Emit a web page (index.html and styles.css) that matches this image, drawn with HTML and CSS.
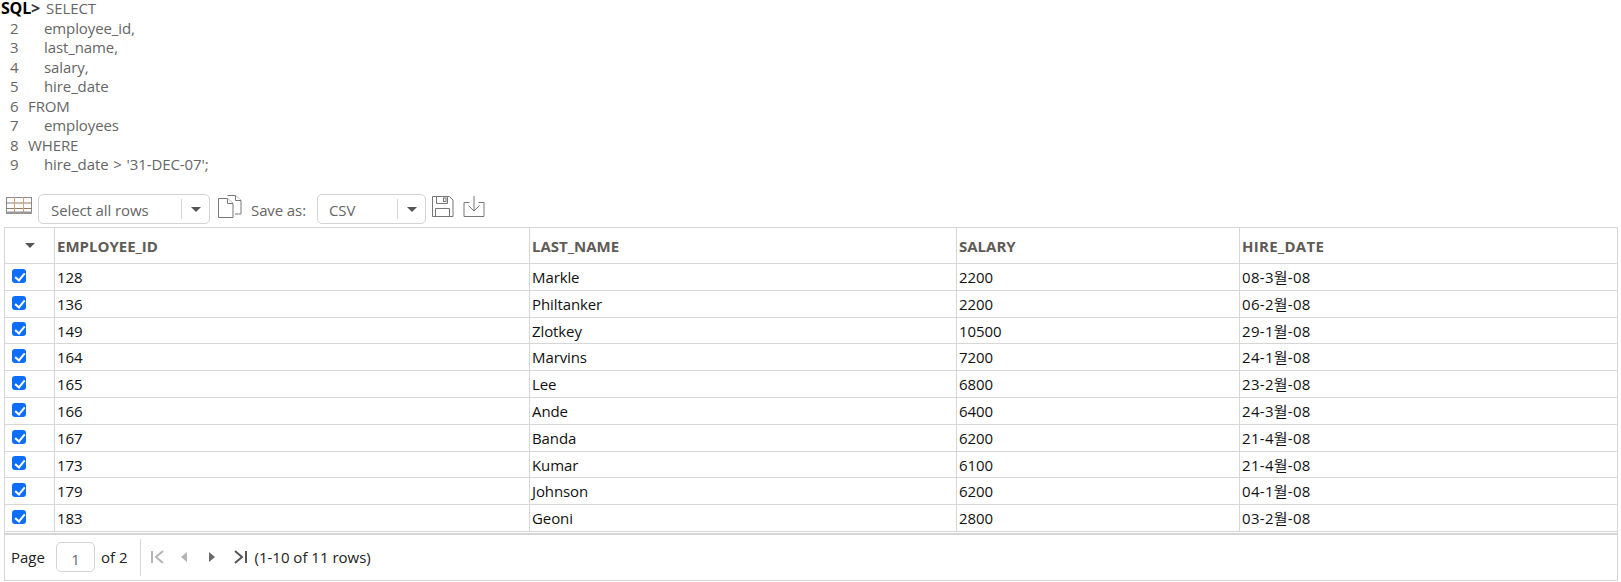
FILE: index.html
```html
<!DOCTYPE html>
<html lang="en">
<head>
<meta charset="utf-8">
<title>SQL result</title>
<link rel="stylesheet" href="styles.css">
</head>
<body>
<div class="sql">
<div class="line"><b class="prompt">SQL</b><b class="gt">&gt;</b><span class="first">SELECT</span></div>
<div class="line"><i class="n">2</i><span class="ind">employee_id,</span></div>
<div class="line"><i class="n">3</i><span class="ind">last_name,</span></div>
<div class="line"><i class="n">4</i><span class="ind">salary,</span></div>
<div class="line"><i class="n">5</i><span class="ind">hire_date</span></div>
<div class="line"><i class="n">6</i><span class="kw">FROM</span></div>
<div class="line"><i class="n">7</i><span class="ind">employees</span></div>
<div class="line"><i class="n">8</i><span class="kw">WHERE</span></div>
<div class="line"><i class="n">9</i><span class="ind">hire_date &gt; '31-DEC-07';</span></div>
</div>

<div class="toolbar">
  <svg class="ic grid-ic" width="26" height="20" viewBox="0 0 26 20"><rect x="0.5" y="0.5" width="25" height="16" fill="#fff" stroke="#8a8a8a"/><path d="M0 6h26M0 11.500h26" stroke="#8a7a6a"/><path d="M8.500 0v17M17.500 0v17" stroke="#d9a070"/><path d="M0 15.500h26" stroke="#999" stroke-width="2"/></svg>
  <div class="select sel-rows"><span class="sel-text">Select all rows</span><span class="sel-arrow"><i class="caret"></i></span></div>
  <svg class="ic copy-ic" width="24" height="23" viewBox="0 0 24 23" fill="#fff" stroke="#777"><path d="M9.500 0.500h8l5.500 5v13.500h-6"/><path d="M17.500 0.500v5h5.500"/><path d="M0.500 3.500h9l5.500 5v14h-14.500z"/><path d="M9.500 3.500v5h5.500"/></svg>
  <span class="save-label">Save as:</span>
  <div class="select sel-csv"><span class="sel-text">CSV</span><span class="sel-arrow"><i class="caret"></i></span></div>
  <svg class="ic save-ic" width="23" height="23" viewBox="0 0 23 23" fill="none" stroke="#777"><path d="M1.500 1.500h17l3.500 3.500v16.500h-20.500z"/><path d="M5.500 1.500v7h11v-7"/><rect x="12.500" y="3" width="2.500" height="3.500"/><path d="M4.500 21.500v-8h14v8"/></svg>
  <svg class="ic dl-ic" width="22" height="23" viewBox="0 0 22 23" fill="none" stroke="#777"><path d="M6.500 7.500h-5.500v14h20v-14h-5.500"/><path d="M11 1v15M5.500 10.500l5.500 5.500 5.500-5.500"/></svg>
</div>

<div class="report">
  <div class="row head">
    <div class="cell c0"><i class="caret"></i></div>
    <div class="cell c1">EMPLOYEE_ID</div>
    <div class="cell c2">LAST_NAME</div>
    <div class="cell c3">SALARY</div>
    <div class="cell c4">HIRE_DATE</div>
  </div>
  <div class="row"><div class="cell c0"><span class="check"></span></div><div class="cell c1">128</div><div class="cell c2">Markle</div><div class="cell c3">2200</div><div class="cell c4">08-3월-08</div></div>
  <div class="row"><div class="cell c0"><span class="check"></span></div><div class="cell c1">136</div><div class="cell c2">Philtanker</div><div class="cell c3">2200</div><div class="cell c4">06-2월-08</div></div>
  <div class="row"><div class="cell c0"><span class="check"></span></div><div class="cell c1">149</div><div class="cell c2">Zlotkey</div><div class="cell c3">10500</div><div class="cell c4">29-1월-08</div></div>
  <div class="row"><div class="cell c0"><span class="check"></span></div><div class="cell c1">164</div><div class="cell c2">Marvins</div><div class="cell c3">7200</div><div class="cell c4">24-1월-08</div></div>
  <div class="row"><div class="cell c0"><span class="check"></span></div><div class="cell c1">165</div><div class="cell c2">Lee</div><div class="cell c3">6800</div><div class="cell c4">23-2월-08</div></div>
  <div class="row"><div class="cell c0"><span class="check"></span></div><div class="cell c1">166</div><div class="cell c2">Ande</div><div class="cell c3">6400</div><div class="cell c4">24-3월-08</div></div>
  <div class="row"><div class="cell c0"><span class="check"></span></div><div class="cell c1">167</div><div class="cell c2">Banda</div><div class="cell c3">6200</div><div class="cell c4">21-4월-08</div></div>
  <div class="row"><div class="cell c0"><span class="check"></span></div><div class="cell c1">173</div><div class="cell c2">Kumar</div><div class="cell c3">6100</div><div class="cell c4">21-4월-08</div></div>
  <div class="row"><div class="cell c0"><span class="check"></span></div><div class="cell c1">179</div><div class="cell c2">Johnson</div><div class="cell c3">6200</div><div class="cell c4">04-1월-08</div></div>
  <div class="row"><div class="cell c0"><span class="check"></span></div><div class="cell c1">183</div><div class="cell c2">Geoni</div><div class="cell c3">2800</div><div class="cell c4">03-2월-08</div></div>
  <div class="pager">
    <span class="pg-label">Page</span>
    <span class="pg-input">1</span>
    <span class="pg-of">of 2</span>
    <span class="pg-sep"></span>
    <svg class="pg-ic first-ic" width="14" height="14" viewBox="0 0 14 14" fill="none" stroke="#b4b4b4" stroke-width="2"><path d="M1 1v12M12 1l-7 6 7 6"/></svg>
    <svg class="pg-ic prev-ic" width="8" height="12" viewBox="0 0 8 12"><path d="M7 1v10L1 6z" fill="#b4b4b4"/></svg>
    <svg class="pg-ic next-ic" width="8" height="12" viewBox="0 0 8 12"><path d="M1 1v10l6-5z" fill="#6a6a6a"/></svg>
    <svg class="pg-ic last-ic" width="14" height="14" viewBox="0 0 14 14" fill="none" stroke="#555" stroke-width="2"><path d="M1 1l7 6-7 6M12 1v12"/></svg>
    <span class="pg-range">(1-10 of 11 rows)</span>
  </div>
</div>
</body>
</html>
```
FILE: styles.css
```css
* { box-sizing: border-box; }
html, body { margin: 0; padding: 0; background: #fff; }
body {
  width: 1621px;
  height: 582px;
  overflow: hidden;
  font-family: "Open Sans", "Noto Sans", "Noto Sans CJK KR", sans-serif;
  font-size: 15px;
  color: #111;
}
i { font-style: normal; }

.sql {
  height: 190px;
  color: #666;
  letter-spacing: -0.1px;
  word-spacing: 1px;
}
.line { height: 19.500px; line-height: 16px; white-space: pre; }
.prompt { color: #000; font-size: 16px; font-weight: 700; margin-left: 1px; letter-spacing: -0.2px; }
.gt { color: #333; font-size: 16px; font-weight: 700; }
.first { margin-left: 6px; }
.n { display: inline-block; width: 28px; padding-left: 10px; }
.ind { margin-left: 16px; }

.toolbar {
  display: flex;
  align-items: center;
  height: 37px;
  padding-left: 6px;
  color: #666;
}
.ic { flex: none; display: block; }
.grid-ic { margin-top: -3px; }
.select {
  display: flex;
  align-items: center;
  height: 30px;
  margin-top: 1px;
  border: 1px solid #d4d4d4;
  border-radius: 5px;
  background: #fff;
}
.sel-rows { width: 172px; margin-left: 6px; }
.sel-csv { width: 109px; margin-left: 11px; }
.sel-text { flex: 1; padding: 2px 0 0 12px; letter-spacing: -0.1px; }
.sel-csv .sel-text { padding-left: 11px; }
.sel-arrow {
  flex: none;
  width: 28px;
  height: 20px;
  border-left: 1px solid #d4d4d4;
  display: flex;
  align-items: center;
  justify-content: center;
}
.caret {
  display: block;
  width: 0;
  height: 0;
  border-left: 5px solid transparent;
  border-right: 5px solid transparent;
  border-top: 5px solid #555;
}
.copy-ic { margin-left: 8px; margin-top: -4px; }
.save-label { margin-left: 9px; padding-top: 2px; letter-spacing: -0.1px; }
.save-ic { margin-left: 5px; margin-top: -4px; }
.dl-ic { margin-left: 9px; margin-top: -4px; }

.report {
  width: 1614px;
  height: 354px;
  margin-left: 4px;
  border: 1px solid #d6d6d6;
}
.row {
  display: flex;
  height: 26.800px;
  border-bottom: 1px solid #d6d6d6;
  line-height: 27px;
  letter-spacing: -0.1px;
}
.row.head {
  height: 36px;
  font-weight: 700;
  color: #5f5b57;
  line-height: 37px;
  letter-spacing: 0;
}
.cell {
  flex: none;
  height: 100%;
  padding-left: 2px;
  border-left: 1px solid #d6d6d6;
  white-space: nowrap;
  overflow: hidden;
}
.c0 { width: 49px; border-left: 0; padding: 0 0 0 7px; display: flex; align-items: center; }
.c1 { width: 475px; }
.c2 { width: 427px; }
.c3 { width: 283px; }
.c4 { flex: 1; letter-spacing: 0.3px; }
.head .c0 { padding-left: 20px; }
.check {
  display: block;
  position: relative;
  width: 14px;
  height: 14px;
  margin-top: -2px;
  background: #0d6efd;
  border-radius: 3px;
}
.check::after {
  content: "";
  position: absolute;
  left: 5px;
  top: 2px;
  width: 4px;
  height: 8px;
  border: solid #fff;
  border-width: 0 2px 2px 0;
  transform: rotate(40deg);
}

.pager {
  display: flex;
  align-items: center;
  height: 47px;
  margin-top: 1px;
  border-top: 2px solid #d6d6d6;
  padding-left: 6px;
  color: #222;
}
.pg-input {
  width: 39px;
  height: 30px;
  margin-left: 11px;
  border: 1px solid #d4d4d4;
  border-radius: 5px;
  text-align: center;
  line-height: 32px;
  color: #666;
}
.pg-of { margin-left: 6px; }
.pg-sep { width: 1px; height: 37px; margin-left: 13px; background: #d6d6d6; }
.pg-ic { flex: none; display: block; }
.first-ic { margin-left: 10px; }
.prev-ic { margin-left: 15px; }
.next-ic { margin-left: 20px; }
.last-ic { margin-left: 18px; }
.pg-range { margin-left: 6px; }
```
